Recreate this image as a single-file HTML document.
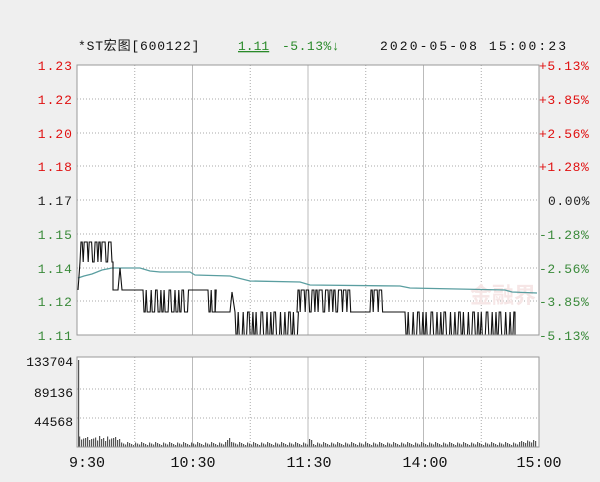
<!DOCTYPE html>
<html><head><meta charset="utf-8"><style>
body{margin:0;background:#efefef;width:600px;height:477px;overflow:hidden;}
svg text{font-family:"Liberation Mono","Noto Sans CJK SC",monospace;font-size:13px;}
</style></head><body>
<svg id="s" width="600" height="477" xmlns="http://www.w3.org/2000/svg">
<rect x="77" y="65" width="462" height="270" fill="#fff"/>
<rect x="77" y="357" width="462" height="90" fill="#fff"/>
<g id="grid"></g>
<text x="470" y="303" fill="#f6e6e6" style="font-family:'Noto Sans CJK SC',sans-serif;font-size:22px;font-weight:bold">金融界</text>
<polyline id="avg" fill="none" stroke="#5a9ea0" stroke-width="1.3" points="78,278 84,276 92,274 102,270 112,268 140,268 150,271 160,272 190,272 195,275 230,276 250,281 300,282 310,285 400,286 410,288 505,290 512,292 537,293"/>
<polyline id="pl" fill="none" stroke="#111" stroke-width="1.1"/>
<g id="vol" fill="#555"></g>
<rect x="77" y="65" width="462" height="270" fill="none" stroke="#999"/>
<rect x="77" y="357" width="462" height="90" fill="none" stroke="#999"/>
<g id="labels">
<text x="78" y="50" fill="#111" letter-spacing="0.8">*ST宏图[600122]</text>
<text x="238" y="50" fill="#2a8a2a" text-decoration="underline">1.11</text>
<text x="282" y="50" fill="#2a8a2a" letter-spacing="0.5">-5.13%↓</text>
<text x="380" y="50" fill="#111" letter-spacing="2.1">2020-05-08 15:00:23</text>
</g>
</svg>
<script>
var NS="http://www.w3.org/2000/svg",s=document.getElementById('s');
function el(p,t,a,txt){var e=document.createElementNS(NS,t);for(var k in a)e.setAttribute(k,a[k]);if(txt)e.textContent=txt;p.appendChild(e);return e;}
var g=document.getElementById('grid');
var ys=[65,99,133,166,200,234,268,301,335];
ys.forEach(function(y,i){if(i>0&&i<8)el(g,'line',{x1:77,x2:539,y1:y,y2:y,stroke:'#aaa','stroke-dasharray':'1,2'});});
[389,418].forEach(function(y){el(g,'line',{x1:77,x2:539,y1:y,y2:y,stroke:'#aaa','stroke-dasharray':'1,2'});});
for(var i=1;i<8;i++){var x=77+i*57.75;var solid=(i%2==0);
el(g,'line',{x1:x,x2:x,y1:65,y2:335,stroke:solid?'#bbb':'#aaa','stroke-dasharray':solid?'':'1,2'});
el(g,'line',{x1:x,x2:x,y1:357,y2:447,stroke:solid?'#bbb':'#aaa','stroke-dasharray':solid?'':'1,2'});}
var L=['1.23','1.22','1.20','1.18','1.17','1.15','1.14','1.12','1.11'];
var R=['+5.13%','+3.85%','+2.56%','+1.28%','0.00%','-1.28%','-2.56%','-3.85%','-5.13%'];
var lab=document.getElementById('labels');
ys.forEach(function(y,i){var c=i<4?'#e01010':(i==4?'#222':'#3a8a3a');
el(lab,'text',{x:73,y:y+5,'text-anchor':'end',fill:c,'letter-spacing':'1'},L[i]);
el(lab,'text',{x:i==4?548:539,y:y+5,fill:c,'letter-spacing':'0.6'},R[i]);});
[['133704',362],['89136',393],['44568',422]].forEach(function(a){el(lab,'text',{x:73,y:a[1]+4,'text-anchor':'end',fill:'#111'},a[0]);});
[['9:30',87],['10:30',193],['11:30',309],['14:00',425],['15:00',539]].forEach(function(a){el(lab,'text',{x:a[1],y:467,'text-anchor':'middle',fill:'#111',style:'font-size:15px'},a[0]);});
var pts=[[78,290],[80,262]];
function osc(x0,x1,a,b){var x=x0,n=0;pts.push([x,a]);while(x<x1-2){x+=1;pts.push([x,b]);x+=1.2+((n*3)%4)*0.6;pts.push([x,b]);x+=1;pts.push([x,a]);if(n%3==2){x+=1.5;pts.push([x,a]);}n++;}pts.push([x1,a]);}
osc(80,113,262,242);
pts.push([113,290],[118,290],[120,268],[122,290],[143,290]);
osc(143,190,290,312);
pts.push([190,290],[208,290]);osc(208,215,290,312);
pts.push([215,312],[230,312],[232,292],[235,312]);
osc(235,297,312,335);
osc(297,350,312,290);
pts.push([350,312],[370,312]);osc(370,385,312,290);
pts.push([385,312],[405,312]);
osc(405,515,312,335);
pts.push([515,335],[537,335]);
document.getElementById('pl').setAttribute('points',pts.map(function(p){return p.join(',')}).join(' '));
var v=document.getElementById('vol');
el(v,'rect',{x:78,y:360,width:1.2,height:87});
for(var x=79;x<537;x+=2){var h=2+((x*13)%7)*0.5;if(x<120)h+=3+((x*5)%4);if(x>225&&x<232)h+=3;if(x==229)h=9;if(x>307&&x<312)h+=3;if(x>520)h+=2;
el(v,'rect',{x:x,y:447-h,width:1.2,height:h});}
</script>
</body></html>
